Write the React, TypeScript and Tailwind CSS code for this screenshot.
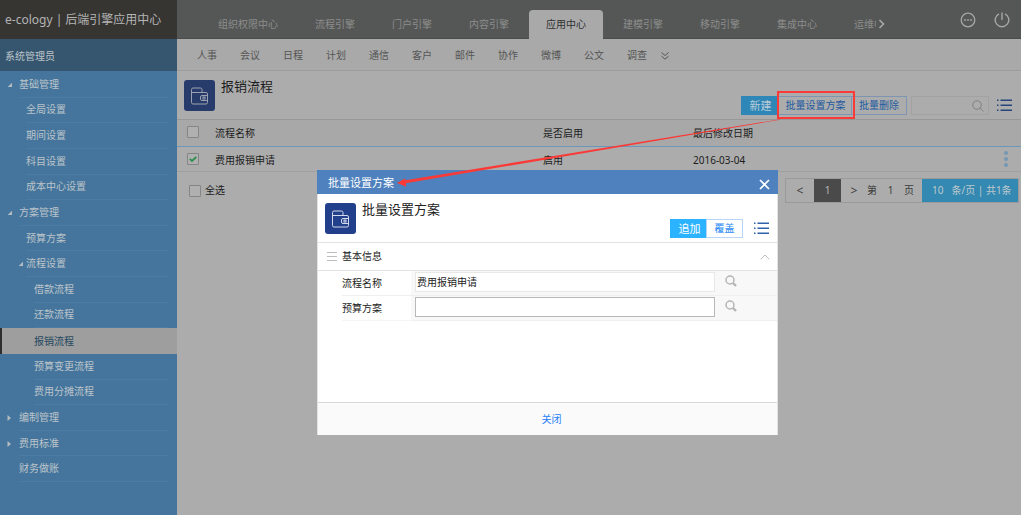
import React from "react";

const rootFont = "font-['Noto_Sans','Noto_Sans_CJK_SC',sans-serif]";

type NavItem = {
  label: string;
  level: 1 | 2 | 3;
  mark?: "open" | "closed";
  active?: boolean;
};

const menu: NavItem[] = [
  { label: "基础管理", level: 1, mark: "open" },
  { label: "全局设置", level: 2 },
  { label: "期间设置", level: 2 },
  { label: "科目设置", level: 2 },
  { label: "成本中心设置", level: 2 },
  { label: "方案管理", level: 1, mark: "open" },
  { label: "预算方案", level: 2 },
  { label: "流程设置", level: 2, mark: "open" },
  { label: "借款流程", level: 3 },
  { label: "还款流程", level: 3 },
  { label: "报销流程", level: 3, active: true },
  { label: "预算变更流程", level: 3 },
  { label: "费用分摊流程", level: 3 },
  { label: "编制管理", level: 1, mark: "closed" },
  { label: "费用标准", level: 1, mark: "closed" },
  { label: "财务做账", level: 1 },
];

const engines = ["组织权限中心", "流程引擎", "门户引擎", "内容引擎", "应用中心", "建模引擎", "移动引擎", "集成中心", "运维中心"];
const modules = ["人事", "会议", "日程", "计划", "通信", "客户", "邮件", "协作", "微博", "公文", "调查"];

const indent = { 1: "pl-[7px]", 2: "pl-[18px]", 3: "pl-[26px]" };

function Marker({ kind }: { kind?: "open" | "closed" }) {
  return (
    <svg viewBox="0 0 6 6" className="size-[6px] shrink-0" fill="#b4bcc2" aria-hidden="true">
      {kind === "open" && <path d="M5 0.8V5H0.6z" />}
      {kind === "closed" && <path d="M0.5 0L4 3 0.5 6z" />}
    </svg>
  );
}

function Wallet({ dim }: { dim?: boolean }) {
  return (
    <span className={`grid size-[31px] shrink-0 place-items-center rounded-[3px] ${dim ? "bg-[#283c6b]" : "bg-[#223f8b]"}`}>
      <svg viewBox="0 0 19 19" className="size-[19px]" fill="none" stroke={dim ? "#9ba1b1" : "#d3daec"} aria-hidden="true">
        <path d="M1.500 6.500h14.500q1.500 0 1.500 1.500v8.500q0 1.500-1.500 1.500H3q-1.500 0-1.500-1.500V3.500Q1.500 2 3 2h7.500q1.500 0 1.500 1.500v3" />
        <path d="M17.500 9.500h-5.500q-1.500 0-1.500 1.500v2q0 1.500 1.500 1.500h5.500" />
        <rect x="13" y="11" width="2" height="2" />
      </svg>
    </span>
  );
}

function ListIcon({ color }: { color: string }) {
  return (
    <svg viewBox="0 0 15 13" className="h-[13px] w-[15px]" fill={color} aria-hidden="true">
      <path d="M0 0.500h1.500V2H0zM3.500 0.500H15V2H3.500zM0 5.500h1.500V7H0zM3.500 5.500H15V7H3.500zM0 10.500h1.500V12H0zM3.500 10.500H15V12H3.500z" />
    </svg>
  );
}

function Tick({ label, checked }: { label: string; checked?: boolean }) {
  return (
    <span className="grid size-3 shrink-0">
      <input
        type="checkbox"
        aria-label={label}
        defaultChecked={checked}
        className="peer col-start-1 row-start-1 size-3 appearance-none rounded-[1px] border border-[#858585] bg-[#b0b0b0]"
      />
      <svg
        viewBox="0 0 12 12"
        className="pointer-events-none invisible col-start-1 row-start-1 size-3 peer-checked:visible"
        fill="none"
        stroke="#2f8f50"
        strokeWidth="1.800"
        aria-hidden="true"
      >
        <path d="M2.800 5.800l2.200 2.200 4.200-4" />
      </svg>
    </span>
  );
}

function Sidebar() {
  return (
    <aside className="w-[177px] shrink-0 bg-[#45759c] text-[#bcc4ca]">
      <div className="flex h-[39px] items-center whitespace-nowrap bg-[#363532] pl-[5px] text-[12px] text-[#b4b4b4]">e-cology | 后端引擎应用中心</div>
      <div className="flex h-8 items-center bg-[#36566f] pl-[5px] pt-[2px]">系统管理员</div>
      <nav className="mt-px grid h-[410px] auto-rows-fr" aria-label="财务菜单">
        {menu.map((item) => (
          <a
            key={item.label}
            href="#"
            className={`flex items-stretch ${indent[item.level]} ${
              item.active ? "bg-[#9e9e9e] text-[#24485f] shadow-[inset_2px_0_0_#2d2d2d]" : "pr-2"
            }`}
          >
            <span className={`flex items-center ${item.level === 1 ? "w-3" : "w-2"}`}>
              <Marker kind={item.mark} />
            </span>
            <span className={`flex flex-1 items-center ${item.active ? "" : "border-b border-[#4e7ca1]"}`}>{item.label}</span>
          </a>
        ))}
      </nav>
    </aside>
  );
}

function TopBar() {
  return (
    <header className="flex h-[39px] items-end bg-[#555756] pl-6 text-[#8c8d8c] shadow-[inset_0_-1px_0_#4b4c4b]">
      <nav className="flex min-w-0 flex-1 gap-[3px] overflow-hidden" aria-label="引擎">
        {engines.map((name) => (
          <a
            key={name}
            href="#"
            className={`flex h-[29px] shrink-0 items-center rounded-t-[4px] px-[17px] ${
              name === "应用中心" ? "bg-[#a9a9a9] text-[#2f3131]" : ""
            }`}
          >
            {name}
          </a>
        ))}
      </nav>
      <div className="flex h-full w-[145px] shrink-0 items-center pr-[11px]">
        <button type="button" aria-label="更多引擎" className="mt-2 flex-1 pl-[2px]">
          <svg viewBox="0 0 8 10" className="h-[10px] w-2" fill="none" stroke="#aaa" strokeWidth="1.500" aria-hidden="true">
            <path d="M1.500 1l4 4-4 4" />
          </svg>
        </button>
        <button type="button" aria-label="消息" className="mr-[18px]">
          <svg viewBox="0 0 16 16" className="size-4" fill="none" stroke="#a6a6a6" strokeWidth="1.300" aria-hidden="true">
            <circle cx="8" cy="8" r="6.800" />
            <path d="M4 8h1.800M7.100 8h1.800M10.200 8H12" strokeWidth="1.600" />
          </svg>
        </button>
        <button type="button" aria-label="退出">
          <svg viewBox="0 0 16 16" className="size-4" fill="none" stroke="#a6a6a6" strokeWidth="1.400" aria-hidden="true">
            <path d="M5 1.800a6.800 6.800 0 1 0 6 0M8 0.500v7.500" />
          </svg>
        </button>
      </div>
    </header>
  );
}

function Pager() {
  return (
    <div className="flex h-[25px] items-stretch border border-[#9a9a9a] text-[#3c3c3c]">
      <button type="button" aria-label="上一页" className="w-[28px] text-[12px]">&lt;</button>
      <button type="button" className="w-[27px] bg-[#4a4a4a] text-[#b8b8b8]">1</button>
      <button type="button" aria-label="下一页" className="w-[26px] text-[12px]">&gt;</button>
      <span className="flex w-[55px] items-center justify-between pr-2">
        <span>第</span>
        <span>1</span>
        <span>页</span>
      </span>
      <span className="flex w-[96px] items-center gap-2 whitespace-nowrap bg-[#3489b2] pl-[10px] text-[#bdc8cd]">
        <span>10</span>
        <span>条/页 | 共1条</span>
      </span>
    </div>
  );
}

function Magnifier() {
  return (
    <svg viewBox="0 0 12 12" className="size-3" fill="none" stroke="#b5b5b5" aria-hidden="true">
      <circle cx="5" cy="5" r="4" strokeWidth="1.500" />
      <path d="M8 8l3 3" strokeWidth="2.400" />
    </svg>
  );
}

function Field({ id, label, value, edge, line }: { id: string; label: string; value: string; edge: string; line: string }) {
  return (
    <div className="flex h-[25px]">
      <label htmlFor={id} className={`ml-[24px] flex w-[69px] items-center border-b ${line}`}>
        {label}
      </label>
      <div className="flex flex-1 items-center border-b border-[#f0f0f0] bg-[#f8f8f8] pb-[2px] pl-1">
        <input id={id} defaultValue={value} className={`h-5 min-w-0 flex-1 border bg-white px-px pb-[2px] outline-none ${edge}`} />
        <button type="button" aria-label={`查找${label}`} className="mb-[2px] ml-[10px] mr-10">
          <Magnifier />
        </button>
      </div>
    </div>
  );
}

function SchemeDialog() {
  return (
    <section
      role="dialog"
      aria-label="批量设置方案"
      className="absolute left-[317px] top-[170px] flex min-h-[265px] w-[461px] flex-col bg-white text-[#222]"
    >
      <header className="flex h-6 items-center justify-between bg-[#4e81bd] pl-[11px] pr-2 text-[11px] text-white">
        批量设置方案
        <button type="button" aria-label="关闭窗口" className="mt-1">
          <svg viewBox="0 0 11 11" className="size-[11px]" fill="none" stroke="#fff" strokeWidth="1.700" aria-hidden="true">
            <path d="M1 1l9 9M10 1l-9 9" />
          </svg>
        </button>
      </header>
      <div className="flex flex-1 flex-col border-x border-[#e2e2e2]">
        <div className="flex h-[49px] items-center border-b border-[#e2e2e2] pl-[7px] pr-2">
          <Wallet />
          <h2 className="mb-[18px] ml-[6px] flex-1 text-[13px] leading-4">批量设置方案</h2>
          <div className="mt-[20px] flex h-[19px]">
            <button type="button" className="w-9 bg-[#2bb3ff] pl-[3px] text-[11px] text-white">追加</button>
            <button type="button" className="w-[37px] border border-[#b7d5f6] text-[#1f8af5]">覆盖</button>
          </div>
          <button type="button" aria-label="菜单" className="ml-[11px] mt-[20px]">
            <ListIcon color="#2f62ab" />
          </button>
        </div>
        <div className="flex h-7 items-center border-b border-[#e2e2e2] pl-[9px] pr-[7px]">
          <svg viewBox="0 0 10 9" className="h-[9px] w-[10px]" stroke="#bdbdbd" aria-hidden="true">
            <path d="M0 0.500h10M0 4.500h10M0 8.500h10" />
          </svg>
          <h3 className="ml-[5px] flex-1">基本信息</h3>
          <button type="button" aria-label="收起">
            <svg viewBox="0 0 10 6" className="h-[6px] w-[10px]" fill="none" stroke="#bdbdbd" aria-hidden="true">
              <path d="M0.800 5.300L5 1l4.200 4.300" />
            </svg>
          </button>
        </div>
        <Field id="flow" label="流程名称" value="费用报销申请" edge="border-[#e8e8e6]" line="border-[#f0f0f0]" />
        <Field id="scheme" label="预算方案" value="" edge="border-[#b8b8b8]" line="border-[#f5f5f5]" />
        <div className="flex-1" />
        <footer className="flex h-[33px] items-center justify-center border-t border-[#d9d9d9] bg-[#fafafa]">
          <button type="button" className="pl-2 text-[#1f80f5]">关闭</button>
        </footer>
      </div>
    </section>
  );
}

export default function App() {
  return (
    <div className={`relative flex min-h-screen bg-[#acacac] text-[10px] leading-[15px] text-[#1c1c1c] ${rootFont}`}>
      <Sidebar />
      <main className="min-w-0 flex-1">
        <TopBar />
        <nav className="flex h-8 items-center gap-[23px] border-b border-[#9c9c9c] bg-[#a9a9a9] pl-5 pt-[2px] text-[#555]" aria-label="模块">
          {modules.map((name) => (
            <a key={name} href="#" className="shrink-0">
              {name}
            </a>
          ))}
          <button type="button" aria-label="更多模块" className="-ml-[9px]">
            <svg viewBox="0 0 8 8" className="size-2" fill="none" stroke="#555" aria-hidden="true">
              <path d="M0.500 0.500L4 3.500l3.500-3M0.500 4.200L4 7.200l3.500-3" />
            </svg>
          </button>
        </nav>

        <div className="flex h-[49px] items-center border-b border-[#979797] pl-[7px] pr-[9px]">
          <Wallet dim />
          <h1 className="mb-[18px] ml-[6px] flex-1 text-[13px] leading-4">报销流程</h1>
          <div className="mt-[21px] flex h-[19px]">
            <button type="button" className="w-[36px] bg-[#2f87b8] pl-[3px] text-[11px] text-[#b9cbd6]">新建</button>
            <button type="button" className="w-[75px] border border-[#7d95b0] pl-[2px] text-[#1c5ba1]">批量设置方案</button>
            <button type="button" className="w-[55px] border border-l-0 border-[#7d95b0] text-[#1c5ba1]">批量删除</button>
          </div>
          <div className="ml-1 mt-[21px] flex h-[19px] w-[78px] items-center border border-[#a2a2a2] pr-1">
            <input type="search" aria-label="搜索" className="min-w-0 flex-1 outline-none" />
            <svg viewBox="0 0 12 12" className="size-3" fill="none" stroke="#808080" aria-hidden="true">
              <circle cx="5" cy="5" r="4.300" />
              <path d="M8.200 8.200l3.300 3.300" />
            </svg>
          </div>
          <button type="button" aria-label="菜单" className="ml-2 mt-[21px]">
            <ListIcon color="#27457a" />
          </button>
        </div>

        <table className="w-full table-fixed border-separate border-spacing-0 text-left">
          <colgroup>
            <col className="w-[38px]" />
            <col className="w-[328px]" />
            <col className="w-[150px]" />
            <col />
            <col className="w-[30px]" />
          </colgroup>
          <thead>
            <tr className="h-[27px] bg-[#a8a8a8] *:border-b *:border-[#6a97bb]">
              <th className="p-0 pb-[2px] pl-[10px]"><Tick label="选择全部流程" /></th>
              <th className="p-0 font-normal">流程名称</th>
              <th className="p-0 font-normal">是否启用</th>
              <th className="p-0 font-normal">最后修改日期</th>
              <th className="p-0" />
            </tr>
          </thead>
          <tbody>
            <tr className="h-[25px] *:border-b *:border-[#a0a0a0]">
              <td className="p-0 pl-[10px]"><Tick label="选择费用报销申请" checked /></td>
              <td className="p-0 pt-[2px]">费用报销申请</td>
              <td className="p-0 pt-[2px]">启用</td>
              <td className="p-0 pt-[2px]">2016-03-04</td>
              <td className="p-0 pl-3">
                <button type="button" aria-label="操作" className="block">
                  <svg viewBox="0 0 6 18" className="h-[18px] w-[6px]" fill="#7598b5" aria-hidden="true">
                    <circle cx="3" cy="3" r="2" />
                    <circle cx="3" cy="9" r="2" />
                    <circle cx="3" cy="15" r="2" />
                  </svg>
                </button>
              </td>
            </tr>
          </tbody>
        </table>

        <div className="flex items-center justify-between pl-3 pr-[2px] pt-[6px]">
          <div className="flex items-center gap-1">
            <Tick label="全选" />
            <span>全选</span>
          </div>
          <Pager />
        </div>
      </main>

      <SchemeDialog />

      <div className="pointer-events-none absolute left-[777px] top-[91px] h-[28px] w-[78px] border-2 border-[#f93a37]" />
      <svg viewBox="0 0 390 72" className="pointer-events-none absolute left-[392px] top-[116px] h-[72px] w-[390px]" fill="#f93a37" aria-hidden="true">
        <path d="M5 67L13 62.400 13.500 64.200 388 3.200 388 3.700 13.800 67.300 14.200 70.800z" />
      </svg>
    </div>
  );
}
